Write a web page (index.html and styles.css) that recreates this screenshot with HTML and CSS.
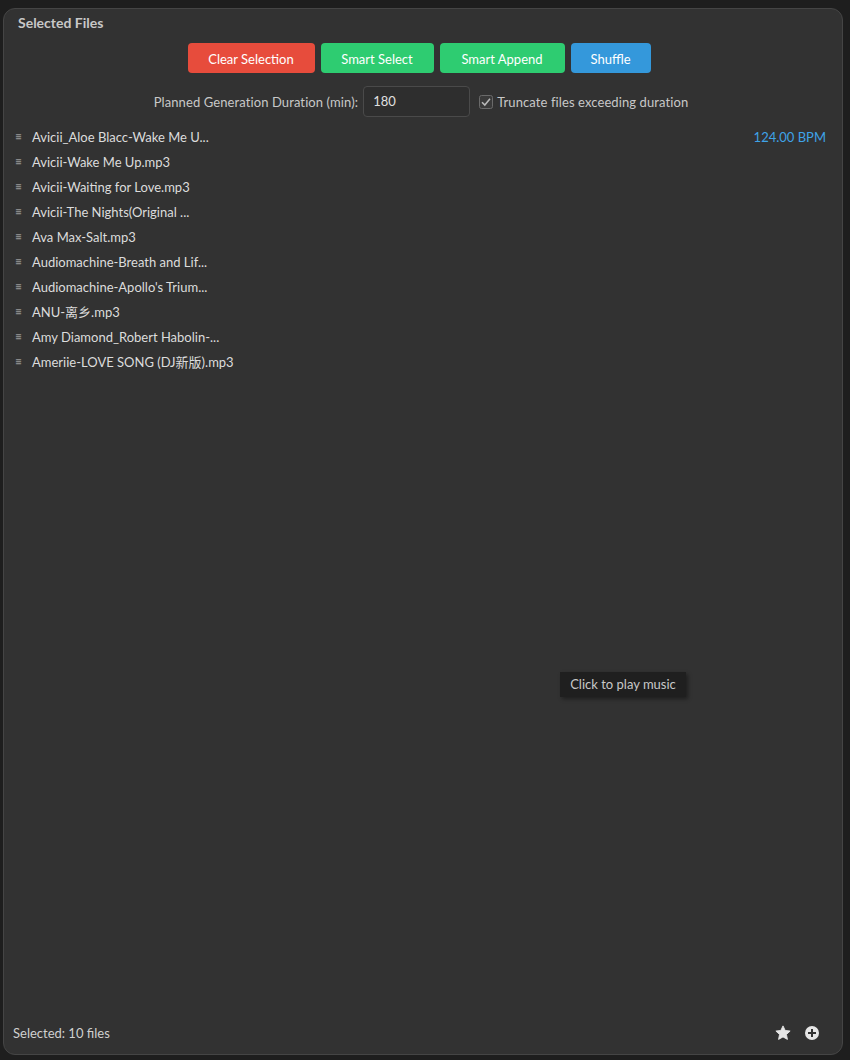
FILE: index.html
```html
<!DOCTYPE html>
<html>
<head>
<meta charset="utf-8">
<link rel="stylesheet" href="styles.css">
</head>
<body>
<div class="panel">
  <div class="title">Selected Files</div>
  <div class="actions">
    <button class="btn red">Clear Selection</button>
    <button class="btn green">Smart Select</button>
    <button class="btn green w-append">Smart Append</button>
    <button class="btn blue">Shuffle</button>
  </div>
  <div class="duration">
    <span class="label">Planned Generation Duration (min):</span>
    <div class="input">180</div>
    <span class="check"><svg width="14" height="14" viewBox="0 0 14 14"><rect x="0.5" y="0.5" width="13" height="13" rx="2" fill="#3a3a3a" stroke="#6a6a6a"/><path d="M3 7.2 L5.8 10 L11 3.8" fill="none" stroke="#b8b8b8" stroke-width="1.6"/></svg></span>
    <span class="label">Truncate files exceeding duration</span>
  </div>
  <ul class="list">
    <li><span class="handle">≡</span><span class="name">Avicii_Aloe Blacc-Wake Me U...</span><span class="bpm">124.00 BPM</span></li>
    <li><span class="handle">≡</span><span class="name">Avicii-Wake Me Up.mp3</span></li>
    <li><span class="handle">≡</span><span class="name">Avicii-Waiting for Love.mp3</span></li>
    <li><span class="handle">≡</span><span class="name">Avicii-The Nights(Original ...</span></li>
    <li><span class="handle">≡</span><span class="name">Ava Max-Salt.mp3</span></li>
    <li><span class="handle">≡</span><span class="name">Audiomachine-Breath and Lif...</span></li>
    <li><span class="handle">≡</span><span class="name">Audiomachine-Apollo's Trium...</span></li>
    <li><span class="handle">≡</span><span class="name">ANU-离乡.mp3</span></li>
    <li><span class="handle">≡</span><span class="name">Amy Diamond_Robert Habolin-...</span></li>
    <li><span class="handle">≡</span><span class="name">Ameriie-LOVE SONG (DJ新版).mp3</span></li>
  </ul>
  <div class="footer">
    <span class="count">Selected: 10 files</span>
    <div class="icons">
      <svg width="18" height="18" viewBox="0 0 24 24"><path d="M12 2.5 L14.9 8.6 L21.5 9.4 L16.6 13.9 L17.9 20.5 L12 17.2 L6.1 20.5 L7.4 13.9 L2.5 9.4 L9.1 8.6 Z" fill="#e6e6e6" stroke="#e6e6e6" stroke-width="1.2" stroke-linejoin="round"/></svg>
      <svg width="16" height="16" viewBox="0 0 16 16"><circle cx="8" cy="8" r="7" fill="#e6e6e6"/><path d="M8 4 V12 M4 8 H12" stroke="#323232" stroke-width="2"/></svg>
    </div>
  </div>
  <div class="tooltip">Click to play music</div>
</div>
</body>
</html>
```
FILE: styles.css
```css
html, body {
  margin: 0;
  height: 100%;
}
body {
  background: #1e1e1e;
  padding: 8px 7px 5px 3px;
  box-sizing: border-box;
  font-family: Lato, "Noto Sans CJK SC", sans-serif;
  font-size: 13px;
  color: #dcdcdc;
}
.panel {
  position: relative;
  height: 100%;
  box-sizing: border-box;
  background: #323232;
  border: 1px solid #454545;
  border-radius: 12px;
  display: flex;
  flex-direction: column;
}
.title {
  font-weight: bold;
  font-size: 14px;
  color: #c8c8c8;
  line-height: 20px;
  padding: 4px 0 0 14px;
}
.actions {
  display: flex;
  justify-content: center;
  gap: 6px;
  margin-top: 10px;
  padding-right: 8px;
}
.btn {
  height: 30px;
  border: none;
  border-radius: 4px;
  color: #fff;
  font-family: inherit;
  font-size: 13px;
  padding: 2px 0 0 0;
}
.red { background: #e74c3c; width: 127px; }
.green { background: #2ecc71; width: 113px; }
.green.w-append { width: 125px; }
.blue { background: #3498db; width: 80px; }
.duration {
  display: flex;
  justify-content: center;
  align-items: center;
  margin-top: 13px;
  padding-right: 4px;
  color: #c8c8c8;
}
.label {
  letter-spacing: 0.1px;
}
.input {
  width: 107px;
  height: 31px;
  box-sizing: border-box;
  border: 1px solid #4a4a4a;
  border-radius: 4px;
  background: #2e2e2e;
  color: #e0e0e0;
  padding-left: 9px;
  line-height: 29px;
  margin: 0 9px 0 5px;
}
.check {
  display: flex;
  margin-right: 4px;
}
.list {
  list-style: none;
  margin: 7px 0 0 0;
  padding: 0 16px 0 11px;
  flex: 1;
}
.list li {
  display: flex;
  align-items: center;
  height: 25px;
}
.handle {
  width: 17px;
  color: #9a9a9a;
  font-size: 12px;
}
.name {
  flex: 1;
  color: #dcdcdc;
}
.bpm {
  color: #3fa3e8;
}
.footer {
  display: flex;
  align-items: center;
  justify-content: space-between;
  padding: 0 22px 8px 9px;
  height: 26px;
}
.count {
  color: #d0d0d0;
}
.icons {
  display: flex;
  align-items: center;
  gap: 12px;
}
.tooltip {
  position: absolute;
  left: 556px;
  top: 663px;
  width: 126px;
  height: 25px;
  box-sizing: border-box;
  background: #1f1f1f;
  color: #c8c8c8;
  line-height: 25px;
  text-align: center;
  box-shadow: 2px 2px 4px rgba(0,0,0,0.4);
}
```
